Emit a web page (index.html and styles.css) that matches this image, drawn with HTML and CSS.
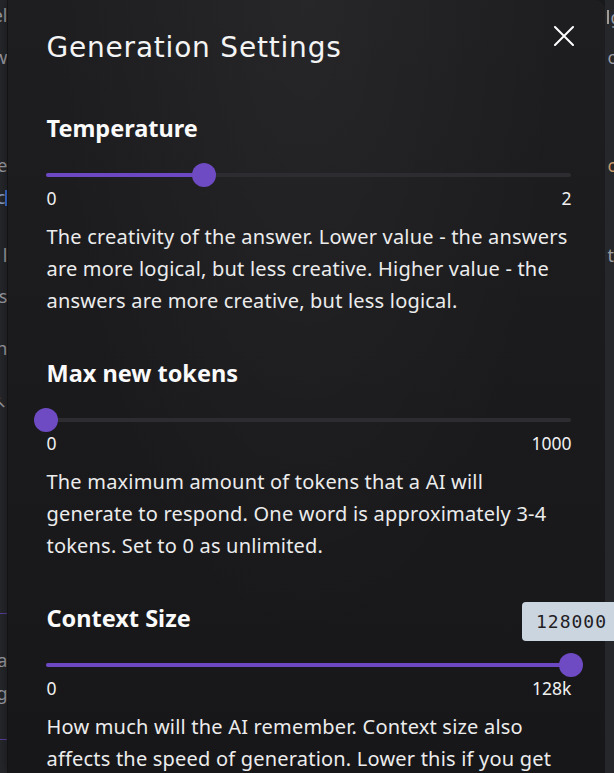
FILE: index.html
```html
<!DOCTYPE html>
<html>
  <head>
    <meta charset="utf-8">
    <title>Generation Settings</title>
    <link rel="stylesheet" href="styles.css">
  </head>
  <body>
    <div class="page">
      <div class="side side-left">
        <span class="frag f1">el</span>
        <span class="frag f2">w</span>
        <span class="frag f3">e</span>
        <span class="frag f4 link">c<i class="caret"></i></span>
        <span class="frag f5">l</span>
        <span class="frag f6">s</span>
        <span class="frag f7">n</span>
        <span class="frag f8">&#8598;</span>
        <span class="rule f9"></span>
        <span class="frag f10">a</span>
        <span class="frag f11">g</span>
        <span class="rule f12"></span>
      </div>

      <div class="modal">
        <div class="modal-head">
          <h2>Generation Settings</h2>
          <button class="close" aria-label="Close">
            <svg width="20" height="20" viewBox="0 0 20 20">
              <path d="M1 1 L19 19 M19 1 L1 19" stroke="#fff" stroke-width="2" stroke-linecap="round"/>
            </svg>
          </button>
        </div>

        <div class="setting">
          <h3>Temperature</h3>
          <div class="slider">
            <div class="fill" style="width: 30%"><span class="thumb"></span></div>
          </div>
          <div class="range"><span>0</span><span>2</span></div>
          <p>The creativity of the answer. Lower value - the answers are more logical, but less creative. Higher value - the answers are more creative, but less logical.</p>
        </div>

        <div class="setting">
          <h3>Max new tokens</h3>
          <div class="slider">
            <div class="fill" style="width: 0%"><span class="thumb"></span></div>
          </div>
          <div class="range"><span>0</span><span>1000</span></div>
          <p>The maximum amount of tokens that a AI will generate to respond. One word is approximately 3-4 tokens. Set to 0 as unlimited.</p>
        </div>

        <div class="setting">
          <h3>Context Size</h3>
          <div class="slider">
            <div class="fill" style="width: 100%"><span class="thumb"><span class="tip">128000</span></span></div>
          </div>
          <div class="range"><span>0</span><span>128k</span></div>
          <p>How much will the AI remember. Context size also affects the speed of generation. Lower this if you get slow responses.</p>
        </div>
      </div>

      <div class="side side-right">
        <span class="frag r1"><i class="bar"></i>g</span>
        <span class="frag r2">o</span>
        <span class="frag r3 warm">c</span>
        <span class="frag r4">t</span>
      </div>
    </div>
  </body>
</html>
```

FILE: styles.css
```css
html, body {
  margin: 0;
  height: 773px;
  overflow: hidden;
  background: #1d1e21;
}
body {
  font-family: "Noto Sans", "Open Sans", sans-serif;
  color: #f0f0f0;
}
.page {
  display: flex;
  height: 773px;
}

/* page behind the dialog */
.side {
  display: flex;
  flex-direction: column;
  background: #26272b;
  overflow: hidden;
  font-size: 18px;
  line-height: 20px;
  color: #9c9da3;
}
.side-left {
  width: 8px;
  align-items: flex-end;
  border-right: 1px solid #19191c;
}
.side-right {
  width: 9px;
  align-items: flex-start;
  padding-left: 2px;
  box-sizing: border-box;
}
.frag {
  display: block;
  white-space: nowrap;
}
.link { color: #8aa2c8; }
.warm { color: #c99a6a; }
.caret {
  display: inline-block;
  width: 2px;
  height: 16px;
  background: #3b6fd8;
  vertical-align: -2px;
}
.bar {
  display: inline-block;
  width: 2px;
  height: 14px;
  background: #a09a94;
  margin-right: 1px;
}
.rule {
  display: block;
  width: 8px;
  height: 1px;
  background: #5a3f9e;
}
.f1 { margin-top: 5px; }
.f2 { margin-top: 22px; }
.f3 { margin-top: 88px; }
.f4 { margin-top: 12px; }
.f5 { margin-top: 38px; }
.f6 { margin-top: 21px; }
.f7 { margin-top: 32px; }
.f8 { margin-top: 33px; }
.f9 { margin-top: 202px; }
.f10 { margin-top: 36px; }
.f11 { margin-top: 13px; }
.f12 { margin-top: 36px; }
.r1 { margin-top: 7px; }
.r2 { margin-top: 20px; }
.r3 { margin-top: 88px; }
.r4 { margin-top: 70px; }

/* dialog */
.modal {
  width: 597px;
  flex: none;
  box-sizing: border-box;
  padding: 30px 34px 0 38px;
  background:
    radial-gradient(ellipse at 50% 0%, rgba(255,255,255,0.04), rgba(255,255,255,0) 60%),
    linear-gradient(180deg, #1e1e21, #17171a);
  border-top-right-radius: 10px;
  box-shadow: 0 0 12px rgba(0,0,0,0.5);
}
.modal-head {
  display: flex;
  justify-content: space-between;
  align-items: flex-start;
  margin-right: -3px;
}
h2 {
  margin: 0;
  font-family: "DejaVu Sans", sans-serif;
  font-weight: normal;
  font-size: 28px;
  letter-spacing: 0.8px;
  line-height: 36px;
  color: #f4f4f4;
}
.close {
  margin-top: -4px;
  padding: 0;
  border: 0;
  background: none;
  cursor: pointer;
}
.setting {
  margin-top: 47px;
}
.setting + .setting {
  margin-top: 41px;
}
h3 {
  margin: 0;
  font-size: 23.5px;
  line-height: 30px;
  font-weight: bold;
  color: #fafafa;
}
.slider {
  margin-top: 20px;
  height: 24px;
  display: flex;
  align-items: center;
  position: relative;
}
.slider::before {
  content: "";
  position: absolute;
  left: 0;
  right: 0;
  height: 4px;
  border-radius: 2px;
  background: #2d2d31;
}
.fill {
  position: relative;
  height: 4px;
  border-radius: 2px;
  background: #6c48c2;
}
.thumb {
  position: absolute;
  right: -12px;
  top: -10px;
  width: 24px;
  height: 24px;
  border-radius: 50%;
  background: #6e4bc3;
}
.tip {
  position: absolute;
  bottom: 36px;
  left: 50%;
  transform: translateX(-50%);
  width: 98px;
  height: 39px;
  line-height: 39px;
  text-align: center;
  border-radius: 4px;
  background: #cbd5df;
  color: #1f2024;
  font-family: "DejaVu Sans Mono", monospace;
  font-size: 18px;
  letter-spacing: 1px;
}
.range {
  display: flex;
  justify-content: space-between;
  margin-top: 1px;
  font-size: 17.5px;
  line-height: 20px;
}
.setting p {
  margin: 13px 0 0;
  font-size: 20px;
  letter-spacing: 0.2px;
  line-height: 32px;
  color: #ececec;
}
```
